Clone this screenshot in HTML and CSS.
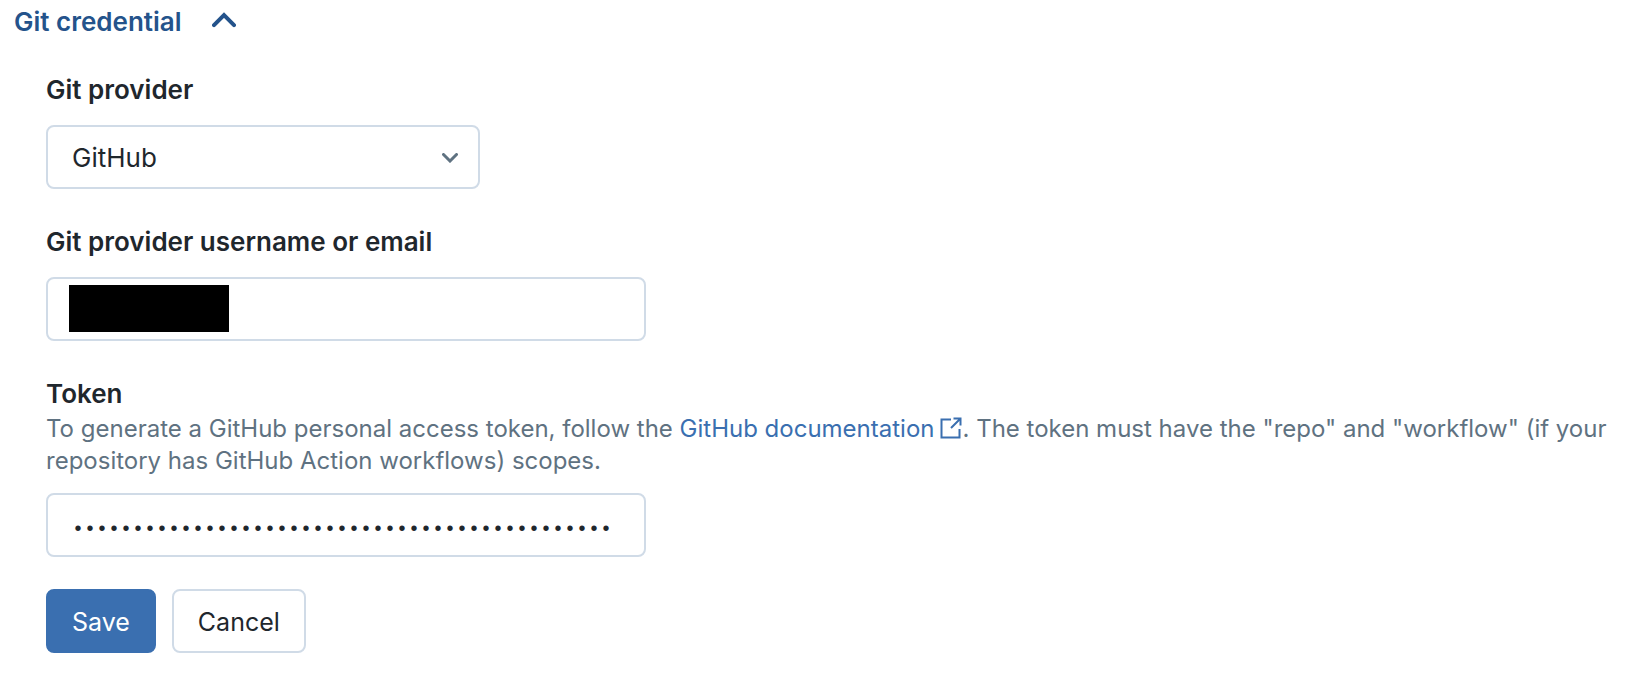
FILE: index.html
```html
<!DOCTYPE html>
<html lang="en">
<head>
<meta charset="utf-8">
<title>Git credential</title>
<link rel="stylesheet" href="styles.css">
</head>
<body>
<section class="panel">
  <button class="panel-toggle" type="button" aria-expanded="true" aria-controls="credential-form">
    <span>Git credential</span>
    <svg class="toggle-icon" viewBox="0 0 24 16" aria-hidden="true"><path d="M2 13.200 12 3.200l10 10"/></svg>
  </button>
  <form class="form" id="credential-form">
    <div class="field">
      <label class="label" for="provider">Git provider</label>
      <div class="select-wrap">
        <select class="control" id="provider"><option>GitHub</option></select>
        <svg class="select-icon" viewBox="0 0 16 10" aria-hidden="true"><path d="M1.500 1.500l6.500 6.500 6.500-6.500"/></svg>
      </div>
    </div>
    <div class="field">
      <label class="label" for="username">Git provider username or email</label>
      <div class="input-wrap">
        <input class="control" id="username" type="text">
        <span class="redaction"></span>
      </div>
    </div>
    <div class="field">
      <div>
        <label class="label" for="token">Token</label>
        <p class="help" id="token-help">To generate a GitHub personal access token, follow the <a class="link" href="#">GitHub documentation<svg class="link-icon" viewBox="0 0 22 22" aria-hidden="true"><path d="M11 2.500H1.500v18h18V12M13.500 1.500h7V8.500M20.500 1.500l-9.500 9.500"/></svg></a>. The token must have the "repo" and "workflow" (if your repository has GitHub Action workflows) scopes.</p>
      </div>
      <div class="input-wrap">
        <input class="control token" id="token" type="password" value="aaaaaaaaaaaaaaaaaaaaaaaaaaaaaaaaaaaaaaaaaaaaa" aria-describedby="token-help">
      </div>
    </div>
    <div class="actions">
      <button class="button primary" type="submit">Save</button>
      <button class="button" type="button">Cancel</button>
    </div>
  </form>
</section>
</body>
</html>
```
FILE: styles.css
```css
* { box-sizing: border-box; }
body {
  margin: 0;
  background: #fff;
  color: #1f272d;
  font-family: Inter, "Liberation Sans", sans-serif;
  font-size: 26px;
}
.panel { padding: 4px 14px; }
.panel-toggle {
  display: flex;
  align-items: center;
  gap: 30px;
  padding: 0;
  border: 0;
  background: none;
  color: #24538b;
  font: inherit;
  font-weight: 600;
  line-height: 36px;
  cursor: pointer;
}
.toggle-icon {
  width: 24px;
  height: 16px;
  margin-bottom: 4px;
  fill: none;
  stroke: currentColor;
  stroke-width: 4;
  stroke-linecap: round;
}
.form {
  display: flex;
  flex-direction: column;
  gap: 35px;
  padding: 32px 16px 0 32px;
}
.field {
  display: flex;
  flex-direction: column;
  gap: 16px;
}
.label {
  display: block;
  padding-bottom: 1px;
  font-weight: 600;
  line-height: 36px;
}
.select-wrap, .input-wrap {
  position: relative;
  max-width: 600px;
}
.select-wrap { max-width: 434px; }
.control {
  appearance: none;
  display: block;
  width: 100%;
  height: 64px;
  padding: 0 24px;
  border: 2px solid #d0dbe7;
  border-radius: 8px;
  background: #fff;
  color: inherit;
  font: inherit;
}
.token {
  padding-top: 8px;
  font-family: "Liberation Mono", monospace;
  font-size: 20px;
}
.select-icon {
  position: absolute;
  top: 28px;
  right: 22px;
  width: 16px;
  height: 10px;
  fill: none;
  stroke: #5f7281;
  stroke-width: 3;
  stroke-linecap: round;
  pointer-events: none;
}
.redaction {
  position: absolute;
  top: 8px;
  left: 23px;
  width: 160px;
  height: 47px;
  background: #000;
}
.help {
  margin: 0;
  color: #5f7281;
  font-size: 24px;
  line-height: 32px;
}
.link {
  color: #3a6fb0;
  text-decoration: none;
}
.link-icon {
  width: 22px;
  height: 22px;
  margin-left: 6px;
  vertical-align: -2px;
  fill: none;
  stroke: currentColor;
  stroke-width: 2;
}
.actions {
  display: flex;
  gap: 16px;
  margin-top: -3px;
}
.button {
  height: 64px;
  padding: 2px 24px 0;
  border: 2px solid #d0dbe7;
  border-radius: 8px;
  background: #fff;
  color: inherit;
  font: inherit;
  font-size: 25px;
  cursor: pointer;
}
.primary {
  border-color: #3a6fb0;
  background: #3a6fb0;
  color: #fff;
}
```
